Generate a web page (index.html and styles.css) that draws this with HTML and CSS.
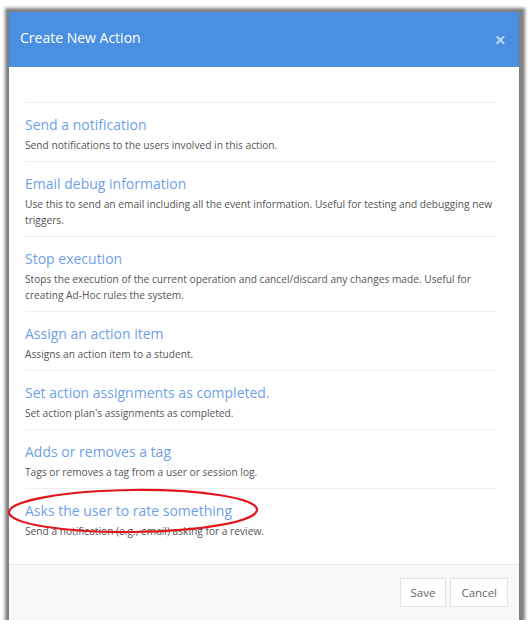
FILE: index.html
```html
<!DOCTYPE html>
<html lang="en">
<head>
    <meta charset="UTF-8">
    <title>Create New Action</title>
    <link rel="stylesheet" href="styles.css">
</head>
<body>
    <div class="modal">
        <div class="modal-header">
            <h4 class="modal-title">Create New Action</h4>
            <span class="close">&times;</span>
        </div>
        <div class="modal-body">
            <ul class="action-list">
                <li>
                    <a href="#">Send a notification</a>
                    <p>Send notifications to the users involved in this action.</p>
                </li>
                <li>
                    <a href="#">Email debug information</a>
                    <p>Use this to send an email including all the event information. Useful for testing and debugging new triggers.</p>
                </li>
                <li>
                    <a href="#">Stop execution</a>
                    <p>Stops the execution of the current operation and cancel/discard any changes made. Useful for creating Ad-Hoc rules the system.</p>
                </li>
                <li>
                    <a href="#">Assign an action item</a>
                    <p>Assigns an action item to a student.</p>
                </li>
                <li>
                    <a href="#">Set action assignments as completed.</a>
                    <p>Set action plan's assignments as completed.</p>
                </li>
                <li>
                    <a href="#">Adds or removes a tag</a>
                    <p>Tags or removes a tag from a user or session log.</p>
                </li>
                <li>
                    <a href="#">Asks the user to rate something</a>
                    <p>Send a notification (e.g., email) asking for a review.</p>
                </li>
            </ul>
        </div>
        <div class="modal-footer">
            <button class="btn">Save</button>
            <button class="btn">Cancel</button>
        </div>
        <svg class="highlight" width="258" height="52" viewBox="0 0 258 52">
            <ellipse cx="127" cy="25" rx="124" ry="21" fill="none" stroke="#e2161d" stroke-width="2.2" transform="rotate(-0.6 127 25)"/>
        </svg>
    </div>
</body>
</html>
```

FILE: styles.css
```css
body {
    margin: 0;
    background: #fff;
    font-family: 'Open Sans', 'Liberation Sans', sans-serif;
}

.modal {
    position: relative;
    width: 510px;
    height: 608px;
    margin: 12px 0 0 9px;
    background: #fff;
    display: flex;
    flex-direction: column;
    box-shadow: 1px 1px 3px 5px rgba(0, 0, 0, 0.5);
}

.modal-header {
    height: 55px;
    background: #4a90e2;
    display: flex;
    align-items: center;
    justify-content: space-between;
    padding: 0 13px 0 11px;
}

.modal-title {
    margin: 0 0 5px;
    font-size: 14px;
    font-weight: 400;
    color: #fff;
}

.close {
    color: rgba(255, 255, 255, 0.6);
    font-size: 20px;
    font-weight: 700;
    line-height: 1;
}

.modal-body {
    flex: 1;
    padding: 35px 22px 0 16px;
}

.action-list {
    list-style: none;
    margin: 0;
    padding: 0;
}

.action-list li {
    border-top: 1px solid #eee;
    padding: 12px 0 8px;
}

.action-list a {
    display: block;
    color: #6f9fe9;
    font-size: 14px;
    line-height: 20px;
    text-decoration: none;
}

.action-list p {
    margin: 2px 0 0;
    font-size: 10.2px;
    line-height: 16px;
    color: #555;
}

.modal-footer {
    border-top: 1px solid #e5e5e5;
    background: #f8f8f8;
    padding: 13px 11px 13px;
    display: flex;
    justify-content: flex-end;
    gap: 4px;
}

.btn {
    height: 29px;
    padding: 0 10px;
    border: 1px solid #e3e3e3;
    background: #fff;
    color: #666;
    font-family: 'Open Sans', sans-serif;
    font-size: 11.5px;
}

.highlight {
    position: absolute;
    left: -3px;
    top: 474px;
}
```
